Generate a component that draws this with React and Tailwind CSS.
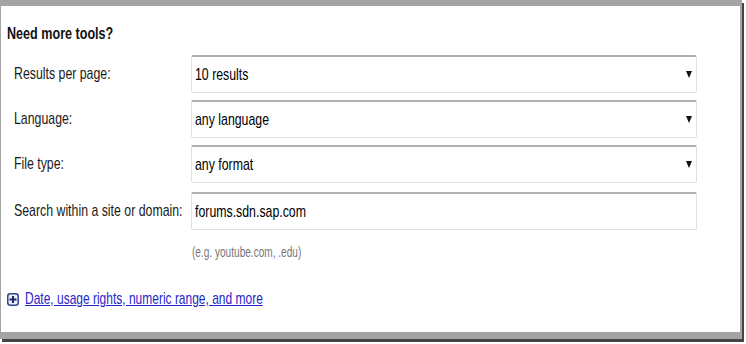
const rows = [
  { label: "Results per page:", value: "10 results", select: true },
  { label: "Language:", value: "any language", select: true },
  { label: "File type:", value: "any format", select: true },
  { label: "Search within a site or domain:", value: "forums.sdn.sap.com", select: false },
];

function Arrow() {
  return (
    <svg width="6" height="7" viewBox="0 0 6 7" className="shrink-0">
      <polygon points="0,0 6,0 3,7" fill="#111" />
    </svg>
  );
}

function PlusBox() {
  return (
    <svg width="12" height="13" viewBox="0 0 12 13" className="shrink-0">
      <rect x="0.75" y="0.75" width="10.5" height="11.5" rx="2.4" fill="#e8ebf6" stroke="#34448a" strokeWidth="1.5" />
      <rect x="2.5" y="5.5" width="7" height="2" fill="#1c2a6a" />
      <rect x="5" y="3" width="2" height="7" fill="#1c2a6a" />
    </svg>
  );
}

export default function App() {
  return (
    <div
      className="w-[746px] h-[344px] bg-white overflow-hidden"
      style={{ fontFamily: '"Liberation Sans", Arial, sans-serif' }}
    >
      <div className="w-[742px] h-[339px] bg-white border-t-[6px] border-l border-r-2 border-b-[7px] border-[#a4a4a4] shadow-[2px_3px_0_#454545] flex flex-col">
        <div className="mt-[18px] pl-[6px] h-[20px] leading-[20px]">
          <span className="inline-block origin-left scale-x-[0.74] text-[17px] font-bold text-[#111] whitespace-nowrap">
            Need more tools?
          </span>
        </div>

        <div className="mt-[11px] flex flex-col gap-[7px] pl-[13px]">
          {rows.map((r, i) => (
            <div key={i} className={"flex items-center h-[38px] " + (i === 3 ? "mt-[2px]" : "")}>
              <div className="w-[177px] shrink-0 leading-[20px]">
                <span className="inline-block origin-left scale-x-[0.725] text-[17px] text-[#1a1a1a] whitespace-nowrap">
                  {r.label}
                </span>
              </div>
              <div className="w-[506px] h-[38px] flex items-center justify-between pl-[3px] pr-[4px] border border-[#e0e0e0] border-t-2 border-t-[#b0b0b0] rounded-[2px] bg-white">
                <span className="inline-block origin-left scale-x-[0.725] text-[17px] text-black whitespace-nowrap leading-[20px]">
                  {r.value}
                </span>
                {r.select && <Arrow />}
              </div>
            </div>
          ))}
        </div>

        <div className="mt-[14px] pl-[191px] leading-[16px]">
          <span className="inline-block origin-left scale-x-[0.72] text-[14px] text-[#777] whitespace-nowrap">
            (e.g. youtube.com, .edu)
          </span>
        </div>

        <div className="mt-[29px] pl-[6px] flex items-center gap-[6px]">
          <PlusBox />
          <a href="#" className="leading-[20px]">
            <span className="inline-block origin-left scale-x-[0.705] text-[17px] text-[#2626c8] underline whitespace-nowrap">
              Date, usage rights, numeric range, and more
            </span>
          </a>
        </div>
      </div>
    </div>
  );
}
